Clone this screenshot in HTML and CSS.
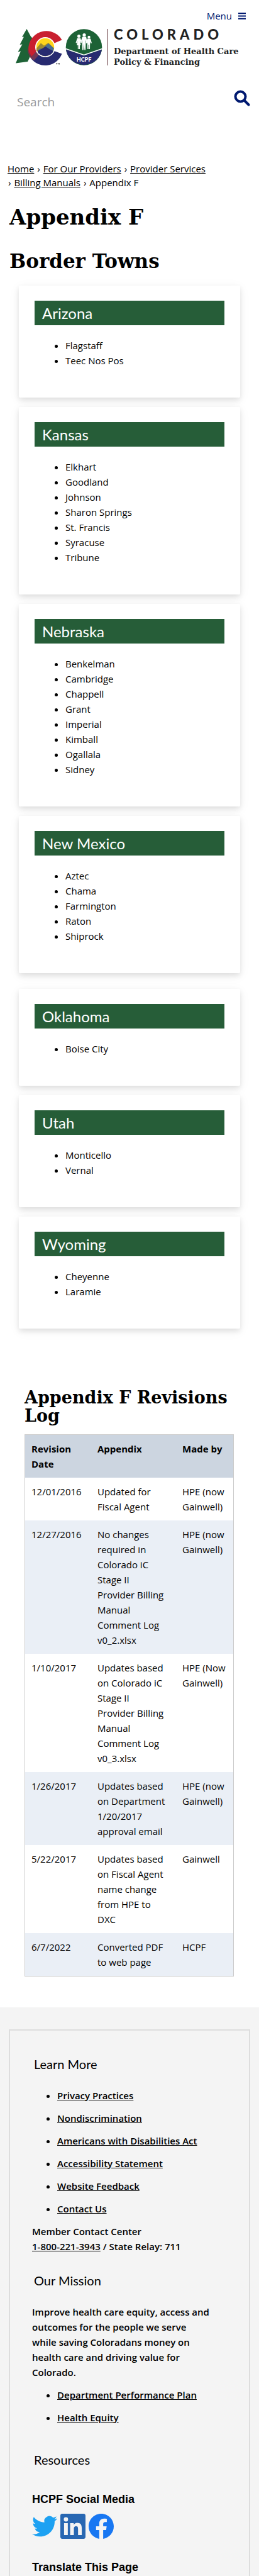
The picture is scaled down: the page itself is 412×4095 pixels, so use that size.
FILE: index.html
```html
<!DOCTYPE html>
<html lang="en">
<head>
<meta charset="utf-8">
<meta name="viewport" content="width=device-width, initial-scale=1">
<title>Appendix F</title>
<link rel="stylesheet" href="styles.css">
</head>
<body>
<header class="site-header">
  <button class="menu-button" type="button">Menu
    <svg class="menu-icon" viewBox="0 0 12 11" aria-hidden="true"><path d="M0 1.2h12M0 5.5h12M0 9.8h12"/></svg>
  </button>
  <a class="brand" href="#">
    <svg class="brand-mark" viewBox="0 0 148 60" role="img" aria-label="Colorado HCPF">
      <path fill="#1d6236" d="M17.5 0 10 13l3-.5-6.5 12.500 4-.5L3.500 36.500l4.500-1L0 54.500l19-2.500 11-23-3-14-3-3z"/>
      <path fill="#c9202f" d="M73.500 17.500A28.500 28.500 0 1 0 24 46L47 29l13.500-6z"/>
      <path fill="#272a70" d="M73.500 39.500A28.500 28.500 0 0 1 24 46.500L47 29l14 6z"/>
      <path fill="#783049" d="M22 43a28.500 28.500 0 0 1-3.500-12L25 43.500l9-7.500-10 10.500z"/>
      <path fill="#743653" d="M24 46.500 36 31l2 9-9 10z"/>
      <circle cx="47" cy="29" r="16" fill="#fff"/>
      <circle cx="47" cy="29" r="14.200" fill="#ffd51c"/>
      <path fill="#9c8930" d="m33 31 7-8.500 5 4 7-4.500 8 8v5H33z"/>
      <path fill="#496e91" d="m35 34 4-3 3 1 10-9 9 8-3 8H35z"/>
      <path fill="#272a70" d="m34.500 35.500 6-3.500 7-4 6 4 6.500 3A14.200 14.200 0 0 1 34.500 35.500z"/>
      <path stroke="#333" stroke-width=".7" fill="none" d="M64 54.500h2.500m-1.250 0v2M67.500 56.500v-2l1 1.500 1-1.500v2"/>
      <circle cx="108.500" cy="29" r="28.800" fill="#1d6236"/>
      <path fill="#272a70" d="M80 32.500 108.500 42.500 137 32.500A28.800 28.800 0 0 1 80 32.500z"/>
      <path fill="none" stroke="#fff" stroke-width="1.500" d="M79.500 31.500 108.500 41.500 137.500 31.500"/>
      <g fill="#fff">
        <circle cx="100.500" cy="11.500" r="2.500"/><circle cx="109" cy="9.500" r="2.600"/><circle cx="116.500" cy="13" r="2.200"/>
        <path d="M98 14.500h5l2 7-1.500.5-1.500-3 1.500 7h-1.500V32h-1.200v-6h-.8v6h-1.200v-6H97l1.500-7-1.500 3.500-1.500-.5z"/>
        <path d="M106 12.500h6l2 9-1.500 1-1-5-.5 16h-1.700l-.8-10-.8 10h-1.700l-.5-16-1 5-1.500-1z"/>
        <path d="M114 15.500h5l2 7-1.500.5-1.200-3-.3 12h-1.500v-7h-.8v7h-1.500l-.5-12-1 3-1.200-.5z"/>
      </g>
      <text class="brand-seal" x="108.500" y="51.500" text-anchor="middle">HCPF</text>
      <path stroke="#5e3037" d="M146.500 0v58"/>
    </svg>
    <span class="brand-text">
      <span class="brand-state">COLORADO</span>
      <span class="brand-dept">Department of Health Care<br>Policy &amp; Financing</span>
    </span>
  </a>
  <form class="search">
    <input class="search-input" type="text" placeholder="Search" aria-label="Search">
    <button class="search-button" type="button" aria-label="Submit search">
      <svg class="search-icon" viewBox="0 0 26 26" aria-hidden="true"><circle cx="10.500" cy="10.500" r="8"/><path d="m16.500 16.500 7 7"/></svg>
    </button>
  </form>
</header>

<main>
  <nav class="breadcrumb" aria-label="Breadcrumb">
    <a href="#">Home</a> <span class="sep">›</span> <a href="#">For Our Providers</a> <span class="sep">›</span> <a href="#">Provider Services</a><br>
    <span class="sep">›</span> <a href="#">Billing Manuals</a> <span class="sep">›</span> <span>Appendix F</span>
  </nav>
  <h1 class="page-title">Appendix F</h1>
  <h2 class="section-title">Border Towns</h2>

  <div class="cards">
    <section class="card">
      <h3 class="card-title">Arizona</h3>
      <ul class="towns"><li>Flagstaff</li><li>Teec Nos Pos</li></ul>
    </section>
    <section class="card">
      <h3 class="card-title">Kansas</h3>
      <ul class="towns"><li>Elkhart</li><li>Goodland</li><li>Johnson</li><li>Sharon Springs</li><li>St. Francis</li><li>Syracuse</li><li>Tribune</li></ul>
    </section>
    <section class="card">
      <h3 class="card-title">Nebraska</h3>
      <ul class="towns"><li>Benkelman</li><li>Cambridge</li><li>Chappell</li><li>Grant</li><li>Imperial</li><li>Kimball</li><li>Ogallala</li><li>Sidney</li></ul>
    </section>
    <section class="card">
      <h3 class="card-title">New Mexico</h3>
      <ul class="towns"><li>Aztec</li><li>Chama</li><li>Farmington</li><li>Raton</li><li>Shiprock</li></ul>
    </section>
  </div>
  <div class="cards cards-second">
    <section class="card">
      <h3 class="card-title">Oklahoma</h3>
      <ul class="towns"><li>Boise City</li></ul>
    </section>
    <section class="card">
      <h3 class="card-title">Utah</h3>
      <ul class="towns"><li>Monticello</li><li>Vernal</li></ul>
    </section>
    <section class="card">
      <h3 class="card-title">Wyoming</h3>
      <ul class="towns"><li>Cheyenne</li><li>Laramie</li></ul>
    </section>
  </div>

  <section class="revisions">
    <h2 class="revisions-title">Appendix F Revisions Log</h2>
    <table class="log">
      <colgroup><col class="col-date"><col class="col-note"><col></colgroup>
      <thead><tr><th scope="col">Revision Date</th><th scope="col">Appendix</th><th scope="col">Made by</th></tr></thead>
      <tbody>
        <tr><td>12/01/2016</td><td>Updated for Fiscal Agent</td><td>HPE (now Gainwell)</td></tr>
        <tr><td>12/27/2016</td><td>No changes required in Colorado iC Stage II<br>Provider Billing Manual Comment Log v0_2.xlsx</td><td>HPE (now Gainwell)</td></tr>
        <tr><td>1/10/2017</td><td>Updates based on Colorado iC Stage II<br>Provider Billing Manual Comment Log v0_3.xlsx</td><td>HPE (Now Gainwell)</td></tr>
        <tr><td>1/26/2017</td><td>Updates based on Department 1/20/2017 approval email</td><td>HPE (now Gainwell)</td></tr>
        <tr><td>5/22/2017</td><td>Updates based on Fiscal Agent name change from HPE to<br>DXC</td><td>Gainwell</td></tr>
        <tr><td>6/7/2022</td><td>Converted PDF to web page</td><td>HCPF</td></tr>
      </tbody>
    </table>
  </section>
</main>

<footer class="site-footer">
  <div class="footer-frame">
    <h2 class="footer-title">Learn More</h2>
    <ul class="footer-links">
      <li><a href="#">Privacy Practices</a></li>
      <li><a href="#">Nondiscrimination</a></li>
      <li><a href="#">Americans with Disabilities Act</a></li>
      <li><a href="#">Accessibility Statement</a></li>
      <li><a href="#">Website Feedback</a></li>
      <li><a href="#">Contact Us</a></li>
    </ul>
    <p class="footer-text">Member Contact Center<br><a href="#">1-800-221-3943</a> / State Relay: 711</p>
    <h2 class="footer-title">Our Mission</h2>
    <p class="footer-text">Improve health care equity, access and outcomes for the people we serve while saving Coloradans money on health care and driving value for Colorado.</p>
    <ul class="footer-links">
      <li><a href="#">Department Performance Plan</a></li>
      <li><a href="#">Health Equity</a></li>
    </ul>
    <h2 class="footer-title footer-resources">Resources</h2>
    <h3 class="footer-subtitle">HCPF Social Media</h3>
    <div class="social">
      <a href="#" aria-label="Twitter"><svg viewBox="0 0 24 24"><path fill="#1da1f2" d="M23.953 4.570a10 10 0 0 1-2.825.775 4.958 4.958 0 0 0 2.163-2.723c-.951.555-2.005.959-3.127 1.184a4.920 4.920 0 0 0-8.384 4.482C7.690 8.095 4.067 6.130 1.640 3.162a4.822 4.822 0 0 0-.666 2.475c0 1.710.870 3.213 2.188 4.096a4.904 4.904 0 0 1-2.228-.616v.060a4.923 4.923 0 0 0 3.946 4.827 4.996 4.996 0 0 1-2.212.085 4.936 4.936 0 0 0 4.604 3.417 9.867 9.867 0 0 1-6.102 2.105c-.390 0-.779-.023-1.170-.067a13.995 13.995 0 0 0 7.557 2.209c9.053 0 13.998-7.496 13.998-13.985 0-.210 0-.420-.015-.630A9.935 9.935 0 0 0 24 4.590z"/></svg></a>
      <a href="#" aria-label="LinkedIn"><svg viewBox="0 0 24 24"><path fill="#2867b2" d="M20.447 20.452h-3.554v-5.569c0-1.328-.027-3.037-1.852-3.037-1.853 0-2.136 1.445-2.136 2.939v5.667H9.351V9h3.414v1.561h.046c.477-.9 1.637-1.850 3.370-1.850 3.601 0 4.267 2.370 4.267 5.455v6.286zM5.337 7.433a2.062 2.062 0 1 1 0-4.125 2.062 2.062 0 0 1 0 4.125zm1.782 13.019H3.555V9h3.564v11.452zM22.225 0H1.771C.792 0 0 .774 0 1.729v20.542C0 23.227.792 24 1.771 24h20.451C23.200 24 24 23.227 24 22.271V1.729C24 .774 23.200 0 22.222 0z"/></svg></a>
      <a href="#" aria-label="Facebook"><svg viewBox="0 0 24 24"><path fill="#1877f2" d="M24 12.073C24 5.405 18.627 0 12 0S0 5.405 0 12.073C0 18.100 4.388 23.094 10.125 24v-8.437H7.078v-3.490h3.047v-2.660c0-3.025 1.791-4.697 4.533-4.697 1.312 0 2.686.236 2.686.236v2.971h-1.513c-1.491 0-1.956.930-1.956 1.886v2.264h3.328l-.532 3.490h-2.796V24C19.612 23.094 24 18.100 24 12.073z"/></svg></a>
    </div>
    <h3 class="footer-subtitle">Translate This Page</h3>
  </div>
</footer>
</body>
</html>
```

FILE: styles.css
```css
* { box-sizing: border-box; }
body {
  margin: 0;
  background: #fff;
  color: #000;
  font-family: "Open Sans", "Noto Sans", sans-serif;
  font-size: 15px;
  line-height: 24px;
}
h1, h2, h3, p, ul { margin: 0; padding: 0; }
a { color: inherit; }
button, input { border: 0; background: none; padding: 0; font-family: inherit; }

.site-header { display: flex; flex-direction: column; padding: 13px 14px 0 25px; }
.menu-button {
  align-self: flex-end;
  display: flex;
  align-items: center;
  gap: 10px;
  margin-right: 7px;
  color: #001970;
  font-size: 15px;
  line-height: 24px;
}
.menu-icon { width: 12px; height: 11px; stroke: #001970; stroke-width: 2; }
.brand { display: flex; gap: 8px; margin-top: 9px; color: #222; text-decoration: none; }
.brand-mark { flex: none; width: 148px; height: 60px; }
.brand-seal { fill: #fff; font-family: Lato, sans-serif; font-size: 9px; font-weight: 900; }
.brand-text { display: flex; flex-direction: column; white-space: nowrap; }
.brand-state { font-family: Lato, sans-serif; font-size: 22px; font-weight: 900; line-height: 18px; letter-spacing: 6px; }
.brand-dept { margin-top: 9px; font-family: "DejaVu Serif", serif; font-size: 13px; font-weight: 700; line-height: 17px; }
.search { display: flex; align-items: flex-start; margin-top: 35px; }
.search-input { flex: 1; min-width: 0; height: 40px; padding: 0 2px; font-size: 19px; color: #333; }
.search-input::placeholder { color: #999; opacity: 1; }
.search-button { width: 26px; height: 26px; margin-top: 1px; }
.search-icon { display: block; width: 26px; height: 26px; fill: none; stroke: #001970; stroke-width: 4; stroke-linecap: round; }

.breadcrumb { padding: 75px 12px 0; font-size: 15px; line-height: 22px; }
.sep { margin: 0 1px; }
.page-title, .section-title, .revisions-title { font-family: "DejaVu Serif", serif; font-weight: 700; }
.page-title { margin: 24px 15px 0; font-size: 34px; line-height: 40px; }
.section-title { margin: 30px 15px 0; font-size: 31px; line-height: 40px; }

.cards { display: flex; flex-direction: column; gap: 15px; padding: 19px 30px 0; }
.cards-second { padding-top: 25px; }
.card {
  padding: 24px 25px 47px;
  background: #fff;
  border-radius: 2px;
  box-shadow: 0 4px 8px rgba(0, 0, 0, .1), 0 4px 20px rgba(0, 0, 0, .05);
}
.card-title {
  padding: 0 12px;
  background: #265d38;
  color: #fff;
  font-family: Lato, sans-serif;
  font-size: 24px;
  font-weight: 400;
  line-height: 39px;
}
.towns { margin-top: 20px; padding-left: 49px; }

.revisions { padding: 95px 40px 49px 39px; }
.revisions-title { font-size: 27px; line-height: 29px; }
.log {
  width: 100%;
  margin-top: 15px;
  border: 1px solid #ccc;
  border-spacing: 0;
  table-layout: fixed;
}
.col-date { width: 105px; }
.col-note { width: 135px; }
.log th, .log td { padding: 10px 5px 10px 10px; text-align: left; vertical-align: top; }
.log td:nth-child(2) { padding-right: 10px; }
.log thead { background: #ccd5e0; }
.log tbody tr:nth-child(even) { background: #eaeff6; }

.site-footer { padding: 35px 14px 0; background: #f4f4f4; }
.footer-frame { padding: 39px 35px 0; border: 2px solid #ddd; border-bottom: 0; }
.footer-title { padding-left: 3px; font-family: Lato, sans-serif; font-size: 20px; font-weight: 400; line-height: 28px; }
.footer-links { display: flex; flex-direction: column; gap: 12px; margin: 24px 0 12px; padding-left: 40px; font-weight: 600; }
.footer-text { padding-right: 24px; font-weight: 600; }
.footer-text + .footer-title { margin-top: 28px; }
.footer-title + .footer-text { margin-top: 24px; }
.footer-text + .footer-links { margin-top: 12px; }
.footer-resources { margin-top: 41px; margin-bottom: 36px; }
.footer-subtitle { font-family: "Liberation Sans", sans-serif; font-size: 18px; font-weight: 700; line-height: 27px; }
.social { display: flex; gap: 5px; margin: 9px 0 32px; }
.social svg { display: block; width: 40px; height: 40px; }
```
